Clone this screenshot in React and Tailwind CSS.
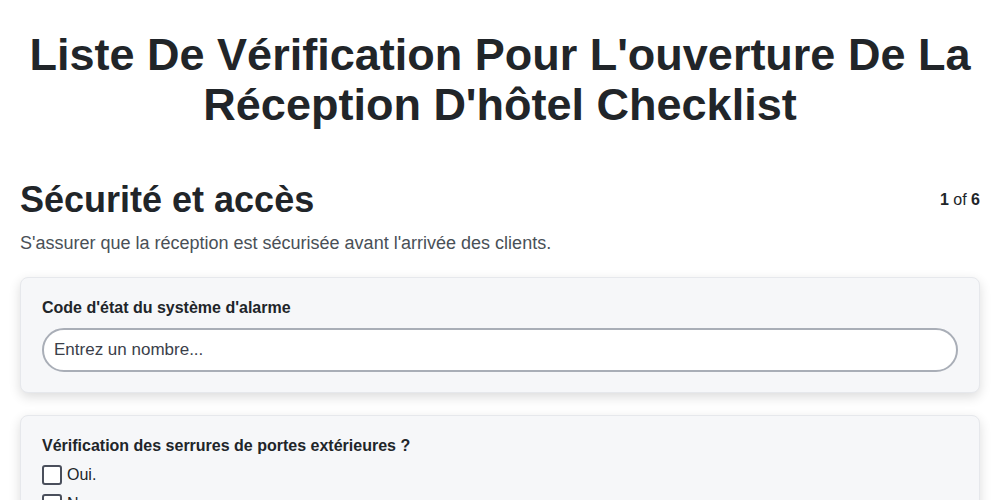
import React from 'react';

const font = { fontFamily: '"Liberation Sans", Arial, sans-serif' };

function Card({ children }) {
  return (
    <div className="rounded-lg border border-[#e6e8ec] bg-[#f6f7f9] px-[21px] py-5 shadow-[0_4px_12px_rgba(0,0,0,0.14)]">
      {children}
    </div>
  );
}

function CheckOption({ label }) {
  return (
    <label className="flex h-5 items-center gap-[5px] text-base text-[#212529]">
      <span className="h-5 w-5 rounded-[3px] border-2 border-[#4a4f5c] bg-white" />
      {label}
    </label>
  );
}

export default function App() {
  return (
    <div className="min-h-screen bg-white px-5 pt-[30px]" style={font}>
      <h1 className="text-center text-[45px] font-bold leading-[50px] text-[#212529]">
        Liste De Vérification Pour L'ouverture De La Réception D'hôtel Checklist
      </h1>

      <div className="mt-[50px] flex items-center justify-between">
        <h2 className="text-4xl font-bold leading-10 text-[#212529]">Sécurité et accès</h2>
        <div className="text-base text-[#212529]">
          <span className="font-bold">1</span> of <span className="font-bold">6</span>
        </div>
      </div>
      <p className="mt-[11px] text-lg leading-6 text-[#495057]">
        S'assurer que la réception est sécurisée avant l'arrivée des clients.
      </p>

      <div className="mt-[22px] flex flex-col gap-[22px]">
        <Card>
          <div className="text-base font-bold leading-5 text-[#212529]">Code d'état du système d'alarme</div>
          <input
            type="text"
            placeholder="Entrez un nombre..."
            className="mt-2.5 h-11 w-full rounded-full border-2 border-[#a9aeb7] bg-white px-[10px] text-[17px] text-[#212529] outline-none placeholder:text-[#3b404a]"
          />
        </Card>
        <Card>
          <div className="text-base font-bold leading-5 text-[#212529]">Vérification des serrures de portes extérieures ?</div>
          <div className="mt-[9px] flex flex-col gap-[9px]">
            <CheckOption label="Oui." />
            <CheckOption label="Non" />
          </div>
        </Card>
      </div>
    </div>
  );
}
